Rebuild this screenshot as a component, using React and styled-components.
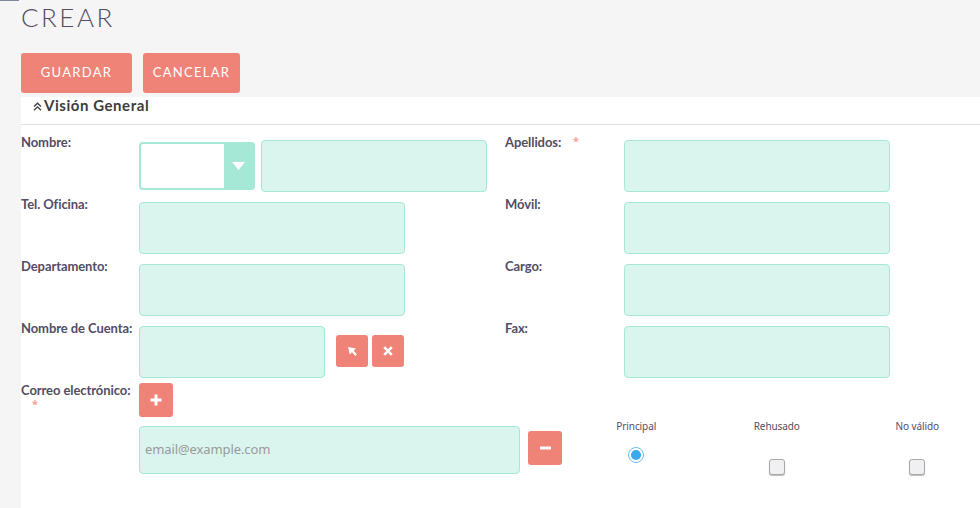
import React from "react";
import styled, { createGlobalStyle } from "styled-components";

const GlobalStyle = createGlobalStyle`
  html, body {
    margin: 0;
    padding: 0;
    background: #f5f5f5;
    font-family: "Lato", "Liberation Sans", sans-serif;
  }
`;

const Page = styled.div`
  position: relative;
  width: 980px;
  height: 508px;
  overflow: hidden;
  padding-left: 21px;
  box-sizing: border-box;
`;
const TopMark = styled.div`
  position: absolute;
  top: 0;
  left: 0;
  width: 19px;
  height: 1px;
  background: #7d8a9c;
`;
const Title = styled.h2`
  margin: 0;
  height: 53px;
  padding-top: 2px;
  box-sizing: border-box;
  font-size: 26px;
  line-height: 30px;
  font-weight: 300;
  letter-spacing: 2.5px;
  color: #534d64;
`;
const Toolbar = styled.div`
  display: flex;
  gap: 11px;
  height: 44px;
`;
const ActionButton = styled.button`
  height: 40px;
  width: ${(p) => p.$width}px;
  padding: 0 0 2px;
  border: 0;
  border-radius: 3px;
  background: #f08377;
  color: #fff;
  font-family: inherit;
  font-size: 13px;
  letter-spacing: 1.3px;
  text-transform: uppercase;
`;
const Panel = styled.div`
  background: #fff;
  height: 411px;
`;
const SectionHead = styled.div`
  display: flex;
  align-items: center;
  gap: 2px;
  height: 28px;
  padding: 0 0 11px 12px;
  box-sizing: border-box;
  border-bottom: 1px solid #ddd;
  color: #3c3c3c;
  font-size: 15px;
  line-height: 18px;
  font-weight: 700;
  letter-spacing: 0.55px;
`;
const FormGrid = styled.div`
  display: grid;
  grid-template-columns: 484px 1fr;
  grid-auto-rows: 52px;
  row-gap: 10px;
  padding-top: 15px;
`;
const Cell = styled.div`
  display: flex;
`;
const Label = styled.div`
  flex: none;
  width: ${(p) => p.$width ?? 118}px;
  margin-top: ${(p) => p.$top ?? 0}px;
  box-sizing: border-box;
  color: #534d64;
  font-size: 13px;
  line-height: 16px;
  font-weight: 700;
  letter-spacing: -0.08px;
`;
const LabelText = styled.div`
  position: relative;
  height: 16px;
`;
const Required = styled.div`
  position: absolute;
  color: #f7a09a;
  font-family: "Noto Sans", sans-serif;
  font-size: 11px;
  line-height: 10px;
  font-weight: 700;
  left: ${(p) => p.$left}px;
  top: ${(p) => p.$y}px;
`;
const Field = styled.div`
  flex: none;
  width: ${(p) => p.$width}px;
  height: 52px;
  box-sizing: border-box;
  border: 1px solid #a5e8d6;
  border-radius: 4px;
  background: #d9f5ee;
  margin-left: ${(p) => p.$ml ?? 0}px;
`;
const SelectBox = styled.div`
  flex: none;
  display: flex;
  align-self: center;
  width: 116px;
  height: 48px;
  box-sizing: border-box;
  border: 2px solid #a5e8d6;
  border-radius: 4px;
  background: #fff;
`;
const SelectValue = styled.div`
  flex: 1;
`;
const SelectArrow = styled.div`
  flex: none;
  display: flex;
  align-items: center;
  justify-content: center;
  width: 29px;
  background: #a5e8d6;
  svg {
    display: block;
  }
`;
const IconButton = styled.button`
  flex: none;
  display: flex;
  align-items: center;
  justify-content: center;
  width: ${(p) => p.$size}px;
  height: ${(p) => p.$size}px;
  padding: 0;
  border: 0;
  border-radius: 3px;
  background: #f08377;
  svg {
    display: block;
  }
`;
const AccountButtons = styled.div`
  display: flex;
  gap: 4px;
  margin: 9px 0 0 11px;
`;
const EmailHead = styled.div`
  display: flex;
  margin-top: 5px;
  height: 43px;
`;
const EmailRow = styled.div`
  display: flex;
  padding-left: 118px;
`;
const EmailField = styled.div`
  flex: none;
  display: flex;
  align-items: center;
  width: 381px;
  height: 48px;
  padding: 0 0 2px 5px;
  box-sizing: border-box;
  border: 1px solid #a5e8d6;
  border-radius: 4px;
  background: #d9f5ee;
  color: #9a9a9a;
  font-family: "Noto Sans", "Open Sans", sans-serif;
  font-size: 13px;
  letter-spacing: -0.1px;
`;
const MinusWrap = styled.div`
  margin: 5px 4px 0 8px;
`;
const Flag = styled.div`
  flex: none;
  width: 140.5px;
  text-align: center;
  color: #534d64;
  font-family: "Noto Sans", "Open Sans", sans-serif;
  font-size: 10px;
  line-height: 14px;
  letter-spacing: -0.1px;
  margin-top: -7px;
`;
const Radio = styled.span`
  display: block;
  box-sizing: border-box;
  width: 16px;
  height: 16px;
  margin: 14px auto 0;
  border-radius: 50%;
  border: 1px solid #6fbdf0;
  padding: 2px;
  background: #fff;
  &::after {
    content: "";
    display: block;
    width: 10px;
    height: 10px;
    border-radius: 50%;
    background: #3aa9ee;
  }
`;
const Check = styled.span`
  display: block;
  box-sizing: border-box;
  width: 16px;
  height: 16px;
  margin: 26px auto 0;
  border: 1px solid #a9a9a9;
  border-radius: 3px;
  background: #f0f0f2;
  box-shadow: 0 1px 1px #bbb;
`;
const ChevronIcon = styled.svg`
  display: block;
  margin-top: 3px;
`;

function Chevrons() {
  return (
    <ChevronIcon width="9" height="9" viewBox="0 0 9 9" fill="none" stroke="#3c3c3c" strokeWidth="1.3">
      <path d="M1 4.5 L4.5 1.2 L8 4.5" />
      <path d="M1 8.2 L4.5 4.9 L8 8.2" />
    </ChevronIcon>
  );
}

function App() {
  return (
    <React.Fragment>
      <GlobalStyle />
      <Page>
        <TopMark />
        <Title>CREAR</Title>
        <Toolbar>
          <ActionButton $width={111}>Guardar</ActionButton>
          <ActionButton $width={97}>Cancelar</ActionButton>
        </Toolbar>
        <Panel>
          <SectionHead>
            <Chevrons />
            Visión General
          </SectionHead>
          <FormGrid>
            <Cell>
              <Label $top={-6}>Nombre:</Label>
              <SelectBox>
                <SelectValue />
                <SelectArrow>
                  <svg width="13" height="8" viewBox="0 0 13 8">
                    <path d="M0 0 H13 L6.5 8 Z" fill="#fff" />
                  </svg>
                </SelectArrow>
              </SelectBox>
              <Field $width={226} $ml={6} />
            </Cell>
            <Cell>
              <Label $top={-6} $width={119}>
                <LabelText>
                  Apellidos:
                  <Required $left={68} $y={2}>*</Required>
                </LabelText>
              </Label>
              <Field $width={266} />
            </Cell>
            <Cell>
              <Label $top={-6}>Tel. Oficina:</Label>
              <Field $width={266} />
            </Cell>
            <Cell>
              <Label $top={-6} $width={119}>Móvil:</Label>
              <Field $width={266} />
            </Cell>
            <Cell>
              <Label $top={-6}>Departamento:</Label>
              <Field $width={266} />
            </Cell>
            <Cell>
              <Label $top={-6} $width={119}>Cargo:</Label>
              <Field $width={266} />
            </Cell>
            <Cell>
              <Label $top={-6}>Nombre de Cuenta:</Label>
              <Field $width={186} />
              <AccountButtons>
                <IconButton $size={32}>
                  <svg width="11" height="11" viewBox="0 0 11 11">
                    <path d="M1 1 L9 2.6 L6.7 4.7 L10 8.4 L8.2 10 L5 6.3 L2.8 8.6 Z" fill="#fff" />
                  </svg>
                </IconButton>
                <IconButton $size={32}>
                  <svg width="10" height="10" viewBox="0 0 10 10" stroke="#fff" strokeWidth="2.6">
                    <path d="M1.2 1.2 L8.8 8.8 M8.8 1.2 L1.2 8.8" />
                  </svg>
                </IconButton>
              </AccountButtons>
            </Cell>
            <Cell>
              <Label $top={-6} $width={119}>Fax:</Label>
              <Field $width={266} />
            </Cell>
          </FormGrid>
          <EmailHead>
            <Label $top={-1}>
              <LabelText>
                Correo electrónico:
                <Required $left={11} $y={17}>*</Required>
              </LabelText>
            </Label>
            <IconButton $size={34}>
              <svg width="12" height="12" viewBox="0 0 12 12" stroke="#fff" strokeWidth="3">
                <path d="M6 0.5 V11.5 M0.5 6 H11.5" />
              </svg>
            </IconButton>
          </EmailHead>
          <EmailRow>
            <EmailField>email@example.com</EmailField>
            <MinusWrap>
              <IconButton $size={34}>
                <svg width="11" height="4" viewBox="0 0 11 4">
                  <rect width="11" height="3" y="0.5" fill="#fff" />
                </svg>
              </IconButton>
            </MinusWrap>
            <Flag>
              Principal
              <Radio />
            </Flag>
            <Flag>
              Rehusado
              <Check />
            </Flag>
            <Flag>
              No válido
              <Check />
            </Flag>
          </EmailRow>
        </Panel>
      </Page>
    </React.Fragment>
  );
}

export default App;
